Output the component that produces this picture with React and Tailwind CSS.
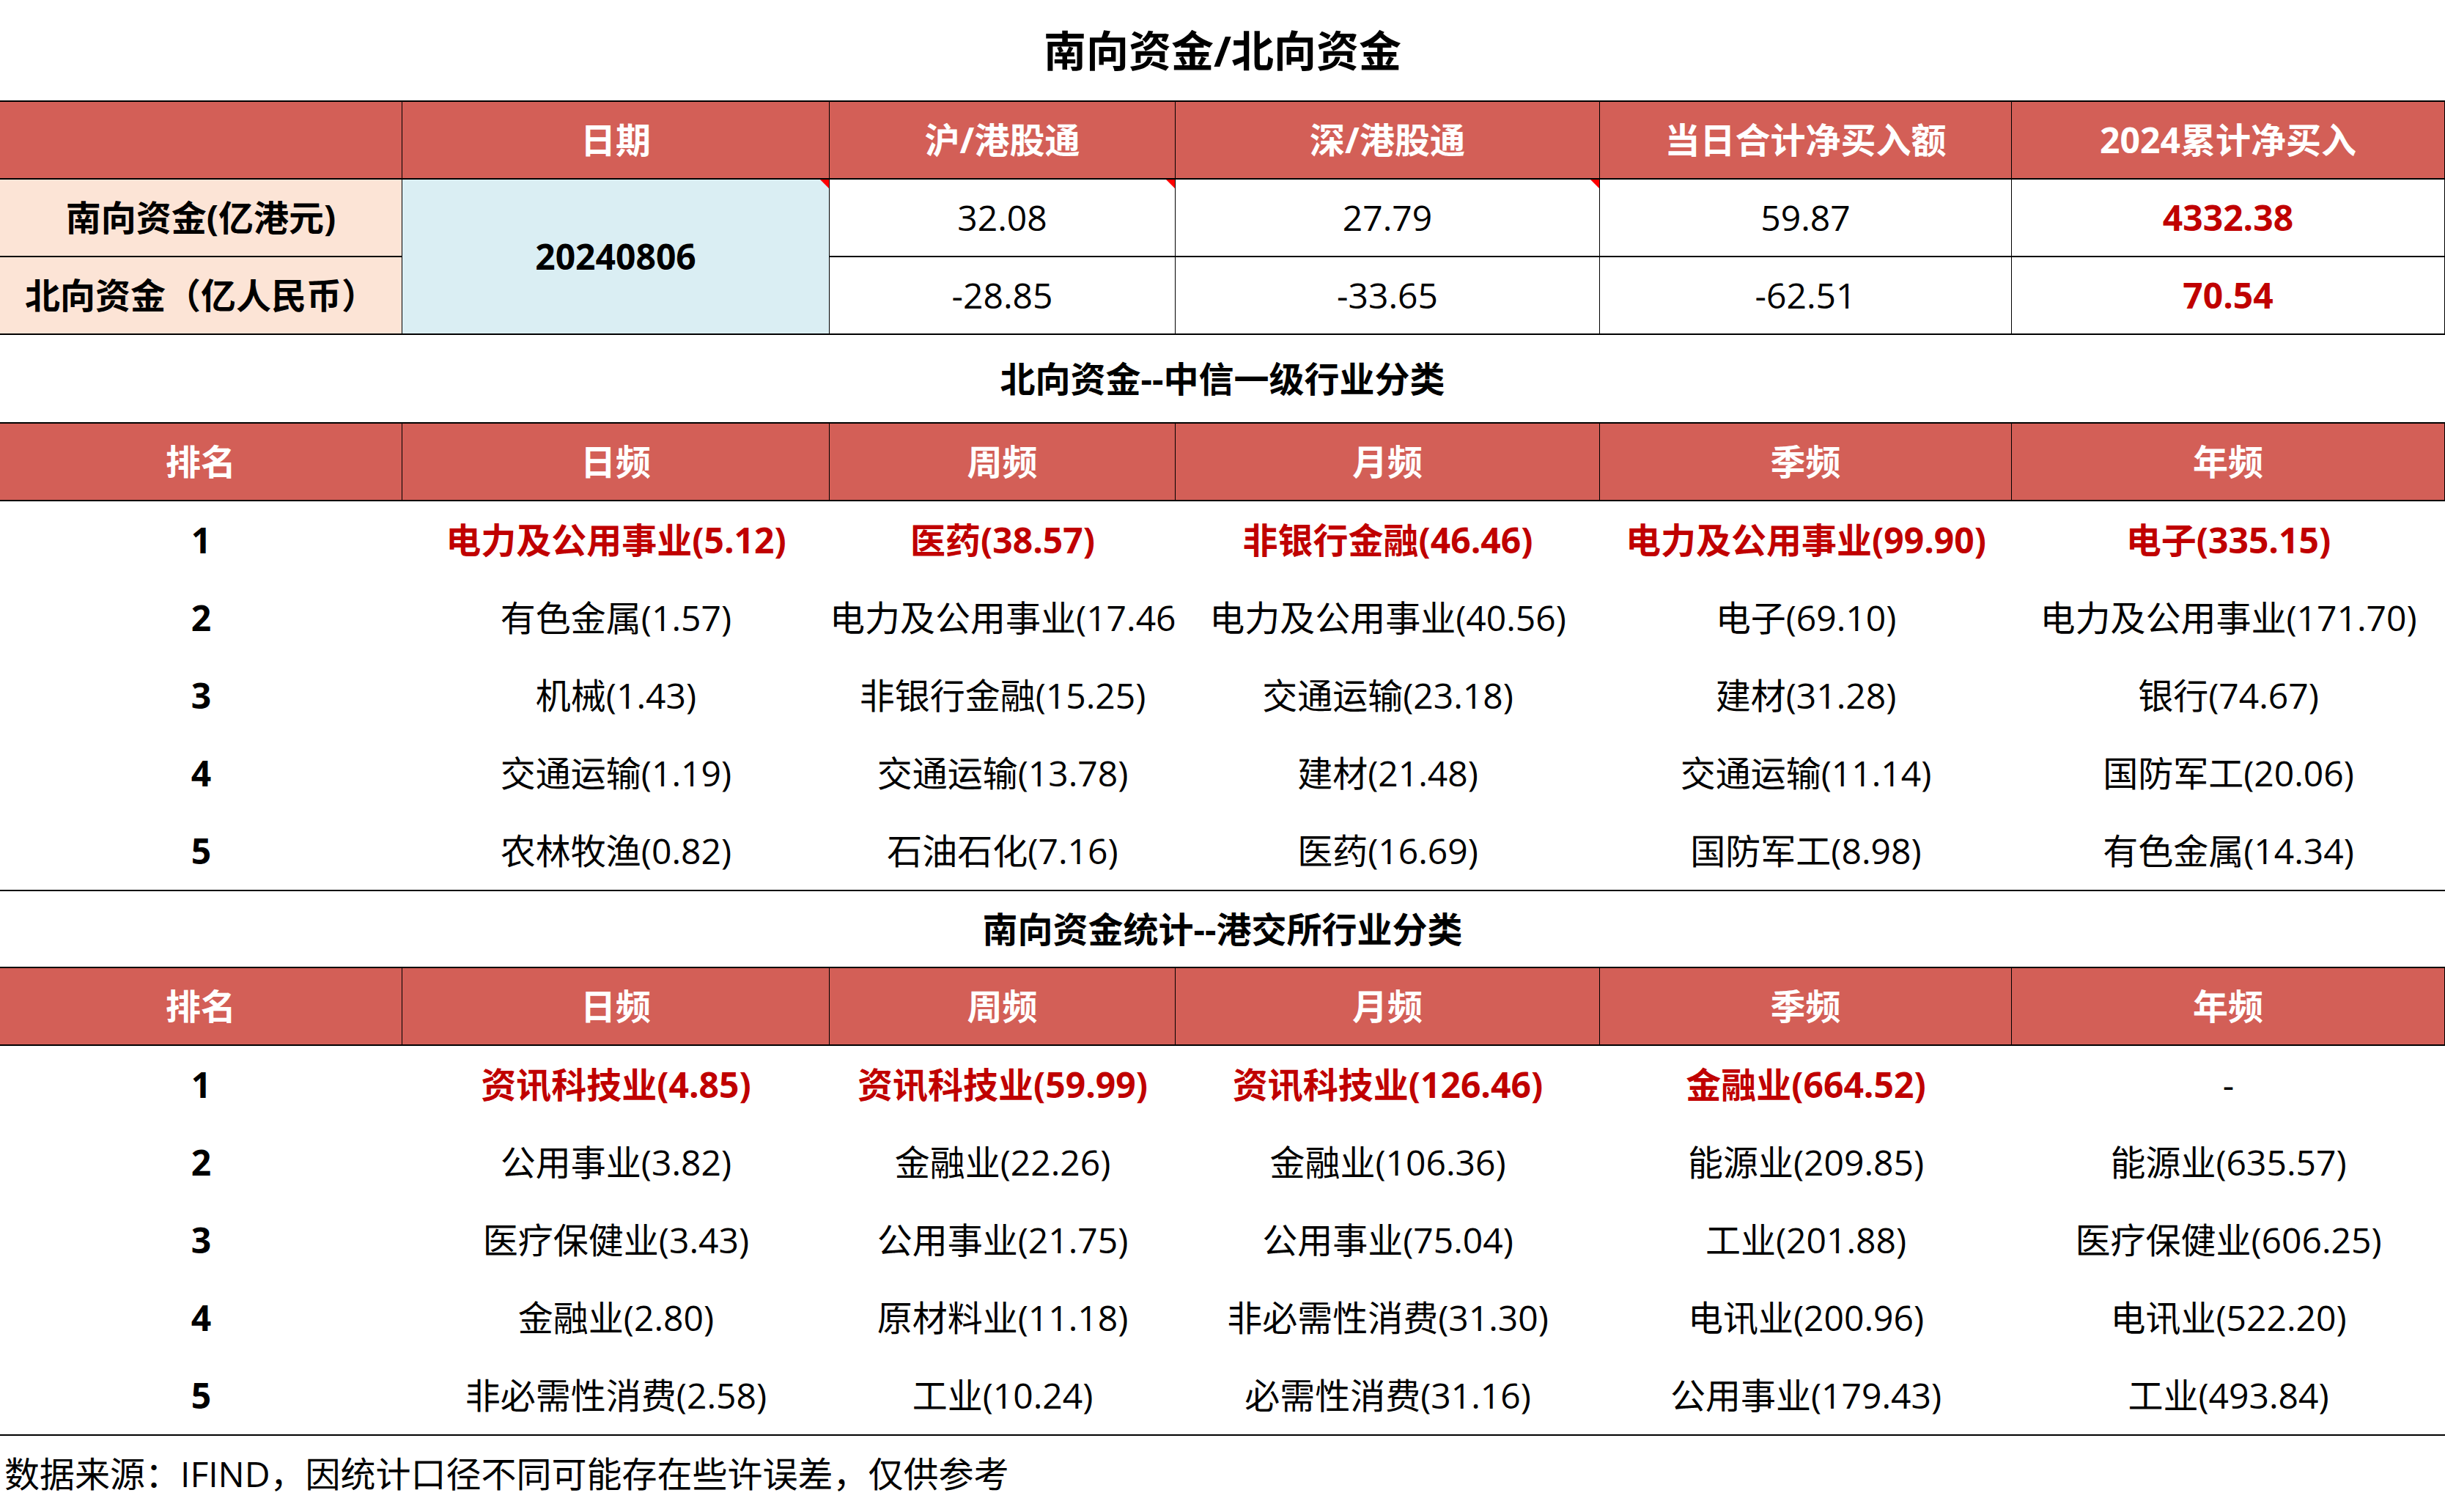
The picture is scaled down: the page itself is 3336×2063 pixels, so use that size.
import React from "react";

const COLS = "grid grid-cols-[549px_583px_472px_579px_562px_591px]";

function Tri() {
  return (
    <div className="absolute top-0 right-0 w-0 h-0 border-l-[12px] border-l-transparent border-t-[12px] border-t-[#FF0000]" />
  );
}

const headers1 = ["", "日期", "沪/港股通", "深/港股通", "当日合计净买入额", "2024累计净买入"];
const freqHeaders = ["排名", "日频", "周频", "月频", "季频", "年频"];

const north = [
  ["电力及公用事业(5.12)", "医药(38.57)", "非银行金融(46.46)", "电力及公用事业(99.90)", "电子(335.15)"],
  ["有色金属(1.57)", "电力及公用事业(17.46)", "电力及公用事业(40.56)", "电子(69.10)", "电力及公用事业(171.70)"],
  ["机械(1.43)", "非银行金融(15.25)", "交通运输(23.18)", "建材(31.28)", "银行(74.67)"],
  ["交通运输(1.19)", "交通运输(13.78)", "建材(21.48)", "交通运输(11.14)", "国防军工(20.06)"],
  ["农林牧渔(0.82)", "石油石化(7.16)", "医药(16.69)", "国防军工(8.98)", "有色金属(14.34)"],
];

const south = [
  ["资讯科技业(4.85)", "资讯科技业(59.99)", "资讯科技业(126.46)", "金融业(664.52)", "-"],
  ["公用事业(3.82)", "金融业(22.26)", "金融业(106.36)", "能源业(209.85)", "能源业(635.57)"],
  ["医疗保健业(3.43)", "公用事业(21.75)", "公用事业(75.04)", "工业(201.88)", "医疗保健业(606.25)"],
  ["金融业(2.80)", "原材料业(11.18)", "非必需性消费(31.30)", "电讯业(200.96)", "电讯业(522.20)"],
  ["非必需性消费(2.58)", "工业(10.24)", "必需性消费(31.16)", "公用事业(179.43)", "工业(493.84)"],
];

function HeaderRow({ labels }) {
  return (
    <>
      {labels.map((h, i) => (
        <div
          key={i}
          className="flex items-center justify-center h-[106px] bg-[#D35F57] border-b-2 border-r border-black text-white font-bold text-[48px] whitespace-nowrap"
        >
          {h}
        </div>
      ))}
    </>
  );
}

function RankTable({ rows }) {
  return (
    <div className={`${COLS} border-t-2 border-black`}>
      <HeaderRow labels={freqHeaders} />
      {rows.map((r, ri) => (
        <React.Fragment key={ri}>
          <div className="flex items-center justify-center h-[106px] font-bold text-[48px] text-black">
            {ri + 1}
          </div>
          {r.map((c, ci) => {
            const top = ri === 0 && c !== "-";
            return (
              <div
                key={ci}
                className={
                  "flex items-center [justify-content:safe_center] h-[106px] overflow-hidden whitespace-nowrap text-[48px] " +
                  (top ? "font-bold text-[#C00000]" : "font-normal text-black")
                }
              >
                {c}
              </div>
            );
          })}
        </React.Fragment>
      ))}
      <div className="col-span-6 h-[2px] bg-black" />
    </div>
  );
}

export default function App() {
  return (
    <div className="w-[3336px] h-[2063px] bg-white flex flex-col font-[Open_Sans,Noto_Sans_CJK_SC,sans-serif] text-black overflow-hidden">
      {/* Title */}
      <div className="h-[137px] flex items-center justify-center text-[58px] font-bold">
        南向资金/北向资金
      </div>

      {/* Table 1 */}
      <div className={`${COLS} border-t-2 border-black`}>
        <HeaderRow labels={headers1} />

        <div className="flex items-center justify-center h-[106px] bg-[#FCE4D6] border-b-2 border-r border-black font-bold text-[48px] whitespace-nowrap">
          南向资金(亿港元)
        </div>
        <div className="relative row-span-2 flex items-center justify-center bg-[#DAEEF3] border-b-2 border-r border-black font-bold text-[48px]">
          20240806
          <Tri />
        </div>
        <div className="relative flex items-center justify-center h-[106px] border-b-2 border-r border-black text-[48px]">
          32.08
          <Tri />
        </div>
        <div className="relative flex items-center justify-center h-[106px] border-b-2 border-r border-black text-[48px]">
          27.79
          <Tri />
        </div>
        <div className="flex items-center justify-center h-[106px] border-b-2 border-r border-black text-[48px]">
          59.87
        </div>
        <div className="flex items-center justify-center h-[106px] border-b-2 border-r border-black text-[48px] font-bold text-[#C00000]">
          4332.38
        </div>

        <div className="flex items-center justify-center h-[106px] bg-[#FCE4D6] border-b-2 border-r border-black font-bold text-[48px] whitespace-nowrap">
          北向资金（亿人民币）
        </div>
        <div className="flex items-center justify-center h-[106px] border-b-2 border-r border-black text-[48px]">
          -28.85
        </div>
        <div className="flex items-center justify-center h-[106px] border-b-2 border-r border-black text-[48px]">
          -33.65
        </div>
        <div className="flex items-center justify-center h-[106px] border-b-2 border-r border-black text-[48px]">
          -62.51
        </div>
        <div className="flex items-center justify-center h-[106px] border-b-2 border-r border-black text-[48px] font-bold text-[#C00000]">
          70.54
        </div>
      </div>

      {/* Section 2 title */}
      <div className="h-[119px] flex items-center justify-center text-[48px] font-bold">
        北向资金--中信一级行业分类
      </div>
      <RankTable rows={north} />

      {/* Section 3 title */}
      <div className="h-[103px] flex items-center justify-center text-[48px] font-bold">
        南向资金统计--港交所行业分类
      </div>
      <RankTable rows={south} />

      {/* Source */}
      <div className="h-[104px] flex items-center pl-[6px] text-[48px] whitespace-nowrap">
        数据来源：IFIND，因统计口径不同可能存在些许误差，仅供参考
      </div>
    </div>
  );
}
